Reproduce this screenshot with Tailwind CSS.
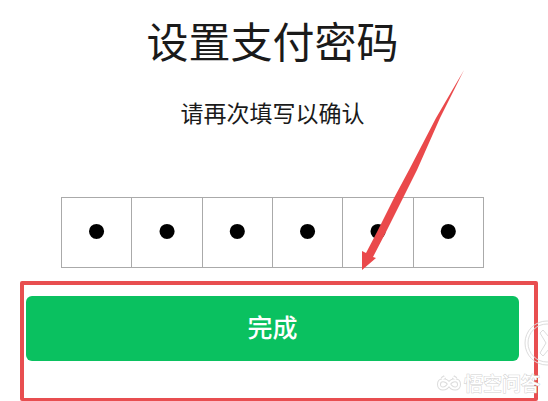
<!DOCTYPE html>
<html lang="zh-CN">
<head>
    <meta charset="UTF-8">
    <meta name="viewport" content="width=device-width, initial-scale=1.0">
    <title>设置支付密码</title>
    <script src="https://cdn.jsdelivr.net/npm/@tailwindcss/browser@4"></script>
</head>
<body class="relative min-h-screen overflow-x-hidden bg-white text-[#1a1a1a] font-['Noto_Sans_CJK_SC',sans-serif]">
    <form id="formulario" class="flex min-h-screen flex-col pt-[14px] pr-[10px] pl-5">
        <h1 class="pr-[13px] text-center text-[42px] leading-[52px]">设置支付密码</h1>
        <p class="mt-[30px] pr-[13px] text-center text-[23px] leading-8">请再次填写以确认</p>

        <!-- password cells -->
        <fieldset class="mt-[69px] mr-[54px] ml-[41px] grid grid-cols-6 border-t border-l border-[#aaa]" aria-label="支付密码">
            <input type="password" maxlength="1" value="1" aria-label="第1位" class="h-[70px] w-full border-r border-b border-[#aaa] pb-1 text-center font-['Liberation_Sans'] text-[56px] text-black">
            <input type="password" maxlength="1" value="1" aria-label="第2位" class="h-[70px] w-full border-r border-b border-[#aaa] pb-1 text-center font-['Liberation_Sans'] text-[56px] text-black">
            <input type="password" maxlength="1" value="1" aria-label="第3位" class="h-[70px] w-full border-r border-b border-[#aaa] pb-1 text-center font-['Liberation_Sans'] text-[56px] text-black">
            <input type="password" maxlength="1" value="1" aria-label="第4位" class="h-[70px] w-full border-r border-b border-[#aaa] pb-1 text-center font-['Liberation_Sans'] text-[56px] text-black">
            <input type="password" maxlength="1" value="1" aria-label="第5位" class="h-[70px] w-full border-r border-b border-[#aaa] pb-1 text-center font-['Liberation_Sans'] text-[56px] text-black">
            <input type="password" maxlength="1" value="1" aria-label="第6位" class="h-[70px] w-full border-r border-b border-[#aaa] pb-1 text-center font-['Liberation_Sans'] text-[56px] text-black">
        </fieldset>

        <!-- highlighted area -->
        <div class="mt-[13px] grow rounded-[2px] border-4 border-b-3 border-[#e84e50] pt-[11px] pr-[15px] pb-9 pl-[2px]">
            <button type="submit" class="h-[65px] w-full rounded-md bg-[#0ac160] pb-1 text-[25px] font-medium text-white">完成</button>
        </div>
    </form>

    <!-- arrow -->
    <svg class="pointer-events-none absolute top-[70px] left-[361px] h-[200px] w-[103px]" viewBox="0 0 103 200" fill="#ea494b" aria-hidden="true">
        <path d="M103 0L75 48L48 100L33 128L16 162L5 183L1 181L1 200L15 188L12 187L25 162L42 128L56 100L79 48Z"/>
    </svg>

    <!-- watermark -->
    <div class="pointer-events-none absolute right-2 bottom-2 flex items-center gap-[3px]">
        <svg class="h-4 w-6" viewBox="0 0 24 16" fill="none" aria-hidden="true">
            <path d="M12 9C9 4 2 4 2 9.500C2 15 9 15 12 9C15 4 22 4 22 9.500C22 15 15 15 12 9M5 4L8 2M19 4L16 2" stroke="#dcdcdc" stroke-width="4"/>
            <path d="M12 9C9 4 2 4 2 9.500C2 15 9 15 12 9C15 4 22 4 22 9.500C22 15 15 15 12 9M5 4L8 2M19 4L16 2" stroke="#fff" stroke-width="2"/>
        </svg>
        <span class="text-[19px] leading-5 font-medium text-white [paint-order:stroke] [-webkit-text-stroke:1px_#d0d0d0]">悟空问答</span>
    </div>
    <div class="pointer-events-none absolute top-[320px] right-0 h-[46px] w-6 overflow-hidden">
        <svg class="h-[46px] w-[46px] max-w-none" viewBox="0 0 46 46" fill="none" stroke="#dcdcdc" aria-hidden="true">
            <circle cx="23" cy="23" r="22"/>
            <circle cx="23" cy="23" r="19"/>
            <path d="M19 10L25 17L31 10L35 14L28 23L35 32L31 36L25 29L19 36L16 33L22 23L16 13Z"/>
        </svg>
    </div>
</body>
</html>
